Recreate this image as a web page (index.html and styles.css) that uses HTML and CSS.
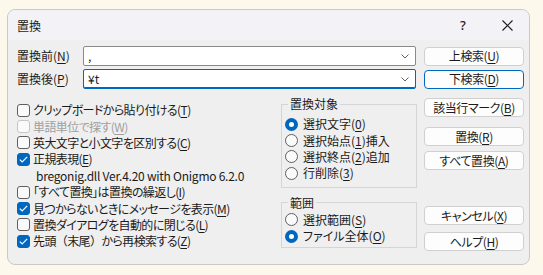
FILE: index.html
```html
<!DOCTYPE html>
<html lang="ja">
<head>
<meta charset="utf-8">
<title>置換</title>
<link rel="stylesheet" href="styles.css">
</head>
<body>
<div class="dialog">
  <div class="titlebar">
    <span class="title">置換</span>
    <span class="tb-btn help">?</span>
    <span class="tb-btn close">
      <svg width="11" height="11" viewBox="0 0 11 11"><path d="M0.5 0.5 L10.5 10.5 M10.5 0.5 L0.5 10.5" stroke="#1b1b1b" stroke-width="1.1" fill="none"/></svg>
    </span>
  </div>
  <div class="content">
    <div class="top">
      <div class="top-row">
        <span class="lbl">置換前(<u>N</u>)</span>
        <div class="combo"><span class="combo-text">,</span><svg class="chev" width="8" height="5" viewBox="0 0 8 5"><path d="M0.5 0.5 L4 4 L7.5 0.5" stroke="#606060" fill="none"/></svg></div>
        <span class="btn">上検索(<u>U</u>)</span>
      </div>
      <div class="top-row">
        <span class="lbl">置換後(<u>P</u>)</span>
        <div class="combo focus"><span class="combo-text">¥t</span><svg class="chev" width="8" height="5" viewBox="0 0 8 5"><path d="M0.5 0.5 L4 4 L7.5 0.5" stroke="#606060" fill="none"/></svg></div>
        <span class="btn default">下検索(<u>D</u>)</span>
      </div>
    </div>
    <div class="main">
      <div class="checks">
        <div class="row"><span class="cb"></span>クリップボードから貼り付ける(<u>T</u>)</div>
        <div class="row disabled"><span class="cb"></span>単語単位で探す(<u>W</u>)</div>
        <div class="row"><span class="cb"></span>英大文字と小文字を区別する(<u>C</u>)</div>
        <div class="row"><span class="cb on"><svg width="9" height="7" viewBox="0 0 9 7"><path d="M0.8 3.6 L3.2 5.9 L8.2 0.9" stroke="#fff" stroke-width="1.2" fill="none"/></svg></span>正規表現(<u>E</u>)</div>
        <div class="row note">bregonig.dll Ver.4.20 with Onigmo 6.2.0</div>
        <div class="row"><span class="cb"></span>「すべて置換」は置換の繰返し(<u>I</u>)</div>
        <div class="row"><span class="cb on"><svg width="9" height="7" viewBox="0 0 9 7"><path d="M0.8 3.6 L3.2 5.9 L8.2 0.9" stroke="#fff" stroke-width="1.2" fill="none"/></svg></span>見つからないときにメッセージを表示(<u>M</u>)</div>
        <div class="row"><span class="cb"></span>置換ダイアログを自動的に閉じる(<u>L</u>)</div>
        <div class="row"><span class="cb on"><svg width="9" height="7" viewBox="0 0 9 7"><path d="M0.8 3.6 L3.2 5.9 L8.2 0.9" stroke="#fff" stroke-width="1.2" fill="none"/></svg></span>先頭<span class="fw">（</span>末尾<span class="fw">）</span>から再検索する(<u>Z</u>)</div>
      </div>
      <div class="groups">
        <fieldset class="group g1">
          <legend>置換対象</legend>
          <div class="row"><span class="rb on"></span>選択文字(<u>0</u>)</div>
          <div class="row"><span class="rb"></span>選択始点(<u>1</u>)挿入</div>
          <div class="row"><span class="rb"></span>選択終点(<u>2</u>)追加</div>
          <div class="row"><span class="rb"></span>行削除(<u>3</u>)</div>
        </fieldset>
        <fieldset class="group g2">
          <legend>範囲</legend>
          <div class="row"><span class="rb"></span>選択範囲(<u>S</u>)</div>
          <div class="row"><span class="rb on"></span>ファイル全体(<u>O</u>)</div>
        </fieldset>
      </div>
      <div class="buttons">
        <span class="btn b-mark">該当行マーク(<u>B</u>)</span>
        <span class="btn b-rep">置換(<u>R</u>)</span>
        <span class="btn b-all">すべて置換(<u>A</u>)</span>
        <span class="btn b-cancel">キャンセル(<u>X</u>)</span>
        <span class="btn b-help">ヘルプ(<u>H</u>)</span>
      </div>
    </div>
  </div>
</div>
</body>
</html>
```
FILE: styles.css
```css
html, body {
  margin: 0;
  padding: 0;
}
body {
  background: #fdf8ec;
  font-family: "Noto Sans CJK JP", "Noto Sans", sans-serif;
  font-size: 12px;
  font-variant-east-asian: proportional-width;
  font-feature-settings: "palt" 1;
  color: #1b1b1b;
  width: 543px;
  height: 275px;
  overflow: hidden;
}
u {
  text-decoration-thickness: 1px;
  text-underline-offset: 2px;
}
.fw {
  font-variant-east-asian: normal;
  font-feature-settings: "palt" 0;
}
.dialog {
  box-sizing: border-box;
  margin: 9px 0 0 7px;
  width: 523px;
  height: 256px;
  border: 1px solid #c9c9c9;
  border-radius: 8px;
  background: #efefef;
  overflow: hidden;
}
.titlebar {
  height: 30px;
  background: #f2f2f7;
  display: flex;
  align-items: center;
  padding-left: 9px;
}
.title {
  flex: 1;
  font-size: 12px;
}
.tb-btn {
  width: 44px;
  height: 30px;
  display: flex;
  align-items: center;
  justify-content: center;
}
.help {
  font-family: "Noto Sans", sans-serif;
  font-size: 13px;
  font-weight: 500;
}
.close svg {
  display: block;
}
.content {
  padding: 6px 5px 0 9px;
}
.top {
  display: flex;
  flex-direction: column;
  gap: 3px;
}
.top-row {
  display: flex;
  align-items: center;
  height: 20px;
}
.lbl {
  width: 66px;
  line-height: 16px;
}
.combo {
  box-sizing: border-box;
  width: 333px;
  height: 20px;
  border: 1px solid #8a8a8a;
  border-radius: 2px;
  background: #fff;
  display: flex;
  align-items: center;
  padding: 0 6px 0 4px;
}
.combo.focus {
  border-color: #0067c0;
  box-shadow: inset 0 -1px 0 #0067c0;
}
.combo-text {
  flex: 1;
  line-height: 16px;
}
.chev {
  display: block;
}
.btn {
  box-sizing: border-box;
  width: 100px;
  height: 19px;
  margin-left: 8px;
  border: 1px solid #d0d0d0;
  border-radius: 4px;
  background: #fdfdfd;
  display: flex;
  align-items: center;
  justify-content: center;
  line-height: 16px;
  letter-spacing: -0.4px;
}
.btn.default {
  border-color: #0067c0;
}
.main {
  display: flex;
}
.checks {
  width: 264px;
  padding-top: 13px;
}
.row {
  height: 16.4px;
  display: flex;
  align-items: center;
  white-space: nowrap;
  line-height: 16px;
  letter-spacing: -0.6px;
}
.cb {
  box-sizing: border-box;
  width: 13px;
  height: 13px;
  border: 1px solid #5f5f5f;
  border-radius: 3px;
  background: #fafafa;
  margin-right: 3px;
  display: flex;
  align-items: center;
  justify-content: center;
  flex: none;
}
.cb.on {
  background: #0067c0;
  border-color: #0067c0;
}
.cb svg {
  display: block;
}
.row.disabled {
  color: #a0a0a0;
}
.row.disabled .cb {
  border-color: #c6c6c6;
}
.row.note {
  padding-left: 19px;
  letter-spacing: -0.25px;
}
.groups {
  width: 136px;
}
.group {
  box-sizing: border-box;
  margin: 0;
  border: 1px solid #d5d5d5;
  border-radius: 0;
  padding: 0 0 0 3px;
  min-width: 0;
}
.group legend {
  padding: 0 2px;
  margin-left: 3px;
  line-height: 16px;
}
.group .row {
  letter-spacing: 0;
}
.g1 {
  margin-top: 7px;
  padding-top: 4px;
  padding-bottom: 5px;
}
.g2 {
  margin-top: 7px;
  padding-top: 1px;
  padding-bottom: 3px;
}
.rb {
  box-sizing: border-box;
  width: 13px;
  height: 13px;
  border: 1px solid #5f5f5f;
  border-radius: 50%;
  background: #fafafa;
  margin-right: 5px;
  flex: none;
}
.rb.on {
  border: 4px solid #0067c0;
  background: #fff;
}
.buttons {
  display: flex;
  flex-direction: column;
  margin-left: -1px;
}
.b-mark { margin-top: 9px; }
.b-rep { margin-top: 10px; }
.b-all { margin-top: 5px; }
.b-cancel { margin-top: 36px; }
.b-help { margin-top: 7px; }
```
